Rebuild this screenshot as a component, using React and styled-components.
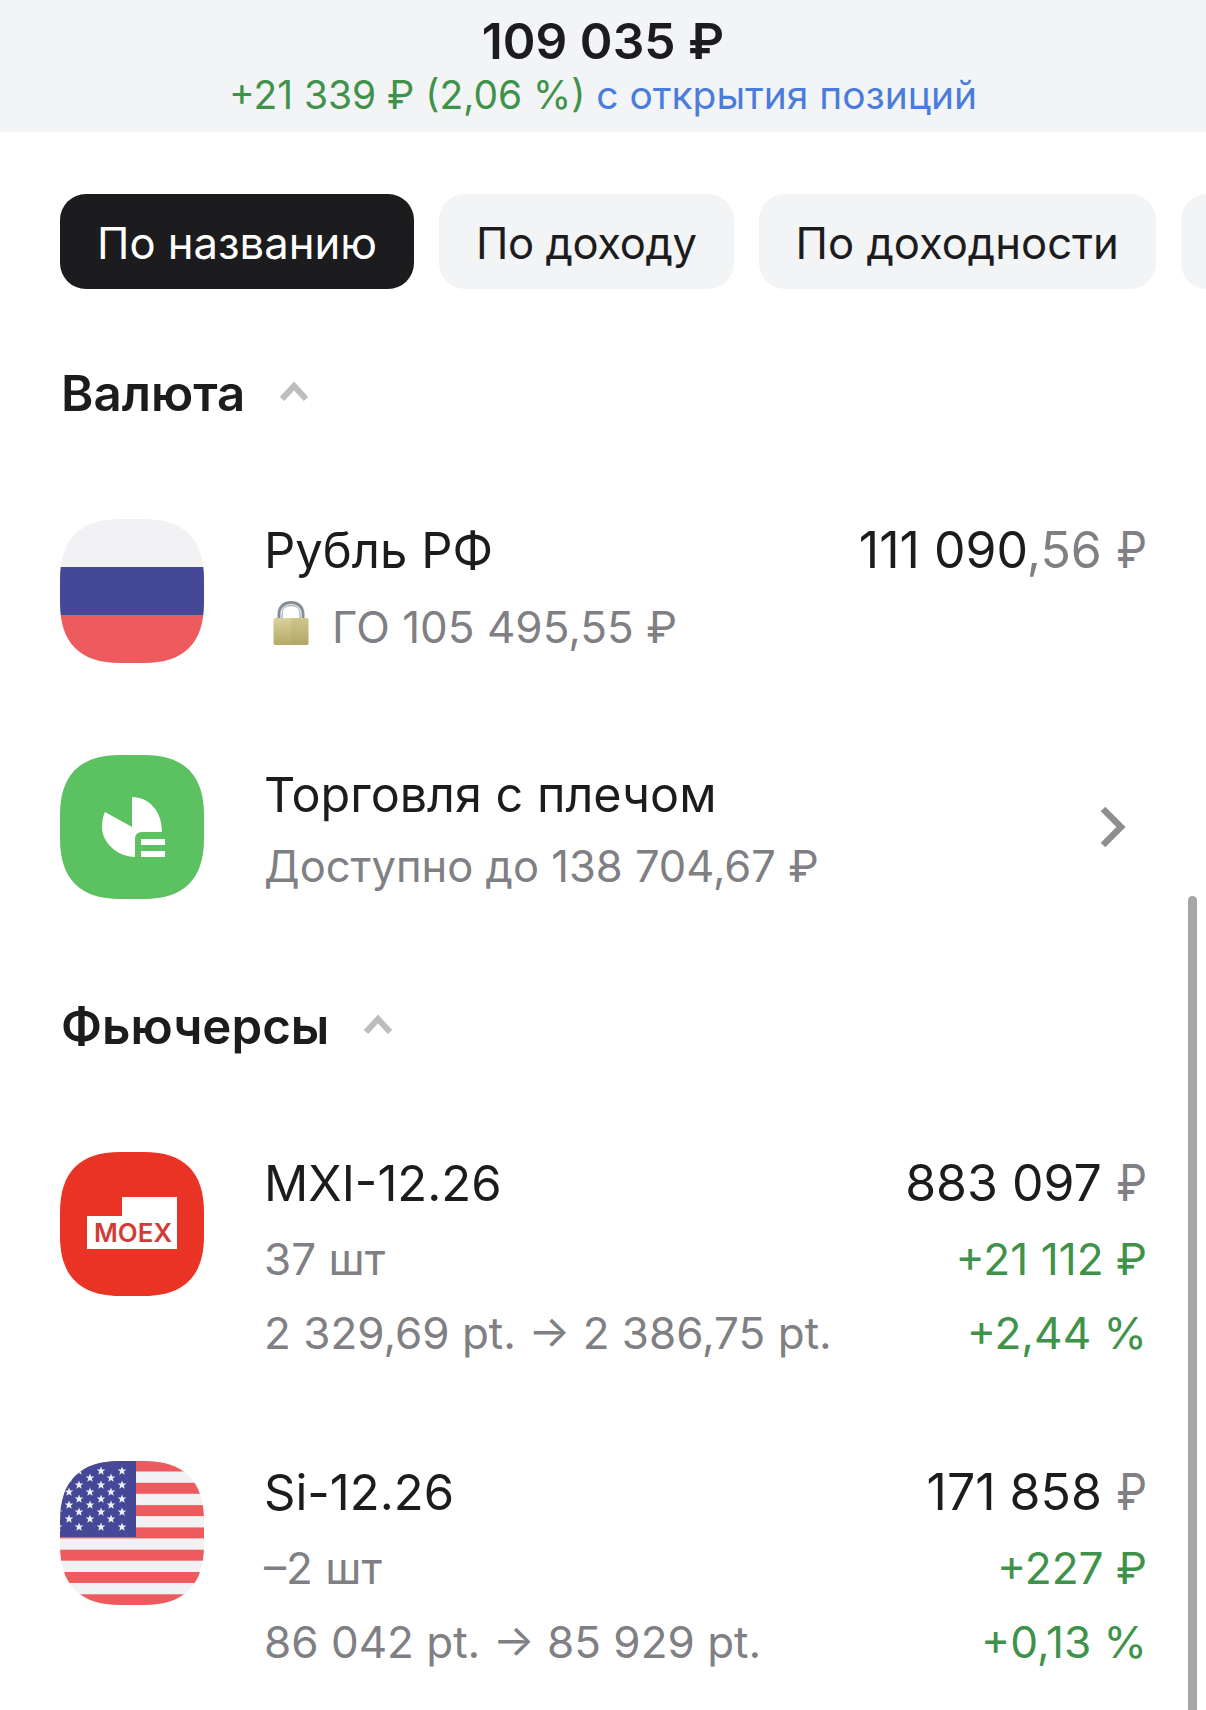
import React from "react";
import styled, { createGlobalStyle } from "styled-components";

const GlobalStyle = createGlobalStyle`
    html, body {
        margin: 0;
        padding: 0;
        background: #ffffff;
    }
    body {
        font-family: "Inter", "Liberation Sans", sans-serif;
        color: #1c1c1e;
    }
`;

const Page = styled.div`
    position: relative;
    width: 1206px;
    height: 1710px;
    overflow: hidden;
    background: #ffffff;
`;

const Header = styled.header`
    height: 132px;
    background: #f2f4f6;
    display: flex;
    flex-direction: column;
    align-items: center;
    box-sizing: border-box;
    padding-top: 12px;
`;

const Total = styled.div`
    font-size: 49.7px;
    line-height: 58px;
    font-weight: 600;
    color: #1c1c1e;
`;

const Summary = styled.div`
    font-size: 38.9px;
    line-height: 50px;
    color: #4a7cdb;
`;

const Green = styled.span`
    color: #3f9249;
`;

const Tabs = styled.nav`
    display: flex;
    gap: 25px;
    margin-top: 62px;
    padding-left: 60px;
    overflow: hidden;
`;

const Tab = styled.div`
    flex: none;
    min-width: 40px;
    height: 95px;
    box-sizing: border-box;
    padding: 3px 37px 0;
    display: flex;
    align-items: center;
    border-radius: 26px;
    font-size: 43.6px;
    letter-spacing: ${(props) => (props.$tight ? "-0.4px" : "0")};
    background: ${(props) => (props.$active ? "#1c1c1e" : "#f2f4f6")};
    color: ${(props) => (props.$active ? "#ffffff" : "#1c1c1e")};
`;

const SectionTitle = styled.h2`
    display: flex;
    align-items: center;
    gap: 34px;
    margin: ${(props) => props.$top}px 0 0;
    padding-left: 61px;
    font-size: 49.2px;
    line-height: 60px;
    font-weight: 600;
    color: #1c1c1e;
`;

const List = styled.div`
    display: flex;
    flex-direction: column;
    gap: ${(props) => props.$gap}px;
    margin-top: ${(props) => props.$top}px;
    padding: 0 59px 0 60px;
`;

const Row = styled.div`
    display: flex;
    gap: 60px;
`;

const IconBox = styled.svg`
    flex: none;
    display: block;
    width: 144px;
    height: 144px;
`;

const Body = styled.div`
    flex: 1;
    min-width: 0;
`;

const Line = styled.div`
    display: flex;
    justify-content: space-between;
    align-items: center;
    height: 74px;
    margin-top: ${(props) => props.$gap || 0}px;
`;

const TitleLine = styled(Line)`
    height: 62px;
`;

const Title = styled.span`
    font-size: 49px;
    color: #1c1c1e;
`;

const Amount = styled.span`
    font-size: 50px;
    color: #1c1c1e;
`;

const Muted = styled.span`
    color: #7f7f84;
`;

// the ruble sign in the amounts is narrower than the font's own
const Rub = styled.span`
    display: inline-block;
    margin-left: -4px;
    color: #7f7f84;
    transform: scaleX(0.87);
    transform-origin: right center;
`;

const Sub = styled.span`
    display: inline-flex;
    align-items: center;
    font-size: 44px;
    color: #7f7f84;
`;

const LockedSub = styled(Sub)`
    padding-top: 2px;
`;

const Gain = styled.span`
    font-size: 44.2px;
    color: #3f9249;
`;

const LeverageBody = styled(Body)`
    padding-top: 8px;
`;

const LeverageTitle = styled(Title)`
    font-size: 48.5px;
`;

const LeverageSub = styled(Sub)`
    font-size: 43.5px;
    line-height: 66px;
    margin-top: 8px;
`;

const LockWrap = styled.svg`
    flex: none;
    width: 36px;
    height: 44px;
    margin: 0 23px 0 9px;
    transform: translateY(-4px);
`;

const ChevronUpIcon = styled.svg`
    flex: none;
    width: 30px;
    height: 20px;
    margin-bottom: 4px;
`;

const ChevronRight = styled.svg`
    flex: none;
    align-self: center;
    width: 26px;
    height: 42px;
    margin-right: 21px;
`;

const Scrollbar = styled.div`
    position: absolute;
    left: 1188px;
    top: 896px;
    bottom: -10px;
    width: 9px;
    border-radius: 5px;
    background: #a6a6a6;
`;

const SQUIRCLE =
    "M60 0H84C124 0 144 20 144 60V84C144 124 124 144 84 144H60C20 144 0 124 0 84V60C0 20 20 0 60 0Z";

const Squircle = ({ id, children }) => (
    <IconBox viewBox="0 0 144 144">
        <defs>
            <clipPath id={id}>
                <path d={SQUIRCLE} />
            </clipPath>
        </defs>
        <g clipPath={`url(#${id})`}>{children}</g>
    </IconBox>
);

const RussiaIcon = () => (
    <Squircle id="ru">
        <rect width="144" height="48" fill="#f2f2f4" />
        <rect y="48" width="144" height="48" fill="#444896" />
        <rect y="96" width="144" height="48" fill="#ee5b5e" />
    </Squircle>
);

const LeverageIcon = () => (
    <Squircle id="lev">
        <rect width="144" height="144" fill="#5cc161" />
        <path
            d="M72 42C89 42 102 56 102 77H82Q75 77 75 84V102C58 102 42 88 42 72C42 66 43 61 45 57L72 72Z"
            fill="#ffffff"
        />
        <rect x="81" y="84" width="24" height="6" fill="#ffffff" />
        <rect x="81" y="96" width="24" height="6" fill="#ffffff" />
    </Squircle>
);

const MoexIcon = () => (
    <Squircle id="moex">
        <rect width="144" height="144" fill="#e93425" />
        <path d="M27 64H62V45H117V97H27Z" fill="#ffffff" />
        <text
            x="34"
            y="90"
            fontFamily="Inter, sans-serif"
            fontWeight="600"
            fontSize="25"
            textLength="78"
            lengthAdjust="spacingAndGlyphs"
            fill="#d23c36"
        >
            MOEX
        </text>
    </Squircle>
);

const starPoints = (cx, cy, r) => {
    const pts = [];
    for (let i = 0; i < 10; i++) {
        const rad = i % 2 ? r * 0.42 : r;
        const a = (Math.PI / 5) * i - Math.PI / 2;
        pts.push(`${(cx + rad * Math.cos(a)).toFixed(2)},${(cy + rad * Math.sin(a)).toFixed(2)}`);
    }
    return pts.join(" ");
};

const STAR_ROWS = [10, 17, 24, 31, 38, 44, 51, 58, 66];

const UsaIcon = () => (
    <Squircle id="us">
        <rect width="144" height="144" fill="#f2f2f4" />
        {Array.from({ length: 7 }).map((_, i) => (
            <rect key={i} y={i * 22.3 - 0.5} width="144" height="11" fill="#ee5b5e" />
        ))}
        <rect width="76" height="76" fill="#444896" />
        {STAR_ROWS.map((y, r) =>
            (r % 2 ? [9, 30, 51] : [-2, 19, 41, 62]).map((x) => (
                <polygon key={`${r}-${x}`} points={starPoints(x, y, 4.6)} fill="#eceef8" />
            ))
        )}
    </Squircle>
);

const LockIcon = () => (
    <LockWrap viewBox="0 0 36 44">
        <defs>
            <linearGradient id="lockBody" x1="0" y1="0" x2="0" y2="1">
                <stop offset="0" stopColor="#d8d19a" />
                <stop offset="1" stopColor="#b5a969" />
            </linearGradient>
        </defs>
        <path d="M7 20V13C7 6 12 2.5 18 2.5S29 6 29 13V20" fill="none" stroke="#878d94" strokeWidth="5" />
        <path d="M8 20V13C8 7 13 3.5 18 3.5S28 7 28 13V20" fill="none" stroke="#dfe2e5" strokeWidth="1.5" />
        <rect x="0.5" y="17" width="35" height="27" rx="2" fill="url(#lockBody)" />
        <rect x="18" y="17" width="17.5" height="27" fill="#a89c58" opacity="0.18" />
    </LockWrap>
);

const ChevronUp = () => (
    <ChevronUpIcon viewBox="0 0 30 20">
        <path d="M3 18L15 5L27 18" fill="none" stroke="#bdbdbd" strokeWidth="6" />
    </ChevronUpIcon>
);

const positions = [
    {
        id: "moex",
        icon: <MoexIcon />,
        name: "MXI-12.26",
        amount: "883 097",
        qty: "37 шт",
        gain: "+21 112 ₽",
        path: "2 329,69 pt. → 2 386,75 pt.",
        pct: "+2,44 %",
    },
    {
        id: "si",
        icon: <UsaIcon />,
        name: "Si-12.26",
        amount: "171 858",
        qty: "–2 шт",
        gain: "+227 ₽",
        path: "86 042 pt. → 85 929 pt.",
        pct: "+0,13 %",
    },
];

const App = () => {
    return (
        <Page>
            <GlobalStyle />
            <Header>
                <Total>109 035 ₽</Total>
                <Summary>
                    <Green>+21 339 ₽ (2,06 %)</Green> с открытия позиций
                </Summary>
            </Header>

            <Tabs>
                <Tab $active>По названию</Tab>
                <Tab $tight>По доходу</Tab>
                <Tab>По доходности</Tab>
                <Tab />
            </Tabs>

            <SectionTitle $top={74}>
                Валюта <ChevronUp />
            </SectionTitle>

            <List $top={96} $gap={92}>
                <Row>
                    <RussiaIcon />
                    <Body>
                        <TitleLine>
                            <Title>Рубль РФ</Title>
                            <Amount>
                                111 090<Muted>,56 </Muted>
                                <Rub>₽</Rub>
                            </Amount>
                        </TitleLine>
                        <Line $gap={8}>
                            <LockedSub>
                                <LockIcon />
                                ГО 105 495,55 ₽
                            </LockedSub>
                        </Line>
                    </Body>
                </Row>
                <Row>
                    <LeverageIcon />
                    <LeverageBody>
                        <TitleLine>
                            <LeverageTitle>Торговля с плечом</LeverageTitle>
                        </TitleLine>
                        <LeverageSub>Доступно до 138 704,67 ₽</LeverageSub>
                    </LeverageBody>
                    <ChevronRight viewBox="0 0 26 42">
                        <path d="M3 3L21 21L3 39" fill="none" stroke="#8e8e8e" strokeWidth="6.5" />
                    </ChevronRight>
                </Row>
            </List>

            <SectionTitle $top={97}>
                Фьючерсы <ChevronUp />
            </SectionTitle>

            <List $top={96} $gap={91}>
                {positions.map((p) => (
                    <Row key={p.id}>
                        {p.icon}
                        <Body>
                            <TitleLine>
                                <Title>{p.name}</Title>
                                <Amount>
                                    {p.amount} <Rub>₽</Rub>
                                </Amount>
                            </TitleLine>
                            <Line $gap={8}>
                                <Sub>{p.qty}</Sub>
                                <Gain>{p.gain}</Gain>
                            </Line>
                            <Line>
                                <Sub>{p.path}</Sub>
                                <Gain>{p.pct}</Gain>
                            </Line>
                        </Body>
                    </Row>
                ))}
            </List>
            <Scrollbar />
        </Page>
    );
};

export default App;
